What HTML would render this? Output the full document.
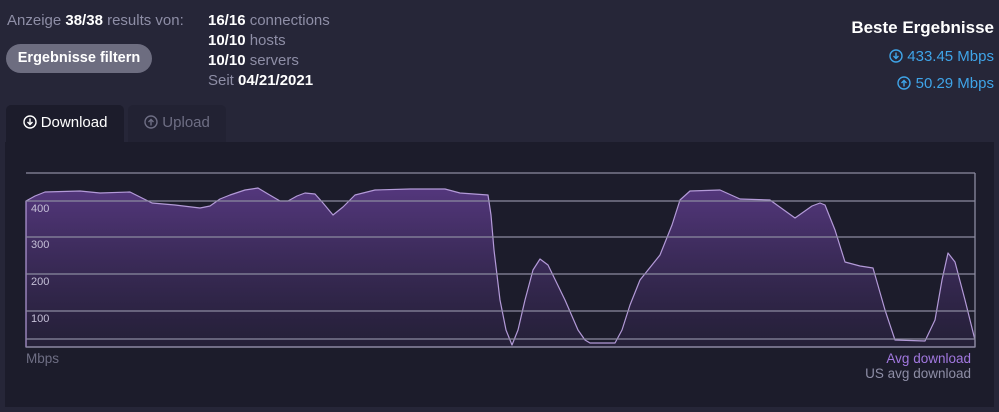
<!DOCTYPE html>
<html><head><meta charset="utf-8"><style>
body{margin:0;width:999px;height:412px;background:#262638;font-family:"Liberation Sans",sans-serif;overflow:hidden;position:relative;color:#8e8ea6}
.a{position:absolute;white-space:nowrap}
b{color:#fff}
svg.i{vertical-align:-2px}
</style></head><body>
<div class="a" style="left:7px;top:12px;font-size:15px">Anzeige <b>38/38</b> results von:</div>
<div class="a" style="left:6px;top:44px;width:146px;height:29px;border-radius:15px;background:#6d6d80;color:#fff;font-size:14.5px;font-weight:bold;line-height:29px;text-align:center">Ergebnisse filtern</div>
<div class="a" style="left:208px;top:11px;font-size:15px;line-height:20px"><b>16/16</b> connections<br><b>10/10</b> hosts<br><b>10/10</b> servers<br>Seit <b>04/21/2021</b></div>
<div class="a" style="right:5px;top:18px;font-size:17px;font-weight:bold;color:#fff">Beste Ergebnisse</div>
<div class="a" style="right:5px;top:48px;font-size:15px;color:#3fa4e8"><svg class="i" width="14" height="14" viewBox="0 0 14 14"><circle cx="7" cy="7" r="6" fill="none" stroke="#3fa4e8" stroke-width="1.4"/><path d="M7 3.5v6M4.5 7l2.5 2.5 2.5-2.5" fill="none" stroke="#3fa4e8" stroke-width="1.4"/></svg> 433.45 Mbps</div>
<div class="a" style="right:5px;top:75px;font-size:15px;color:#3fa4e8"><svg class="i" width="14" height="14" viewBox="0 0 14 14"><circle cx="7" cy="7" r="6" fill="none" stroke="#3fa4e8" stroke-width="1.4"/><path d="M7 10.5v-6M4.5 7l2.5-2.5 2.5 2.5" fill="none" stroke="#3fa4e8" stroke-width="1.4"/></svg> 50.29 Mbps</div>
<div class="a" style="left:6px;top:105px;width:118px;height:40px;background:#1c1c2b;border-radius:5px 5px 0 0;color:#fff;font-size:15px;line-height:36px;text-align:center"><svg class="i" width="14" height="14" viewBox="0 0 14 14"><circle cx="7" cy="7" r="6" fill="none" stroke="#fff" stroke-width="1.4"/><path d="M7 3.5v6M4.5 7l2.5 2.5 2.5-2.5" fill="none" stroke="#fff" stroke-width="1.4"/></svg> Download</div>
<div class="a" style="left:128px;top:105px;width:98px;height:37px;background:#222233;border-radius:5px 5px 0 0;color:#6e6e84;font-size:15px;line-height:36px;text-align:center"><svg class="i" width="14" height="14" viewBox="0 0 14 14"><circle cx="7" cy="7" r="6" fill="none" stroke="#6e6e84" stroke-width="1.4"/><path d="M7 10.5v-6M4.5 7l2.5-2.5 2.5 2.5" fill="none" stroke="#6e6e84" stroke-width="1.4"/></svg> Upload</div>
<div class="a" style="left:5px;top:142px;width:989px;height:265px;background:#1c1c2b"></div>
<svg class="a" style="left:0;top:0" width="999" height="412">
<defs><linearGradient id="g" x1="0" y1="0" x2="0" y2="1"><stop offset="0" stop-color="#5a3a86" stop-opacity=".9"/><stop offset="1" stop-color="#2a2240" stop-opacity=".6"/></linearGradient></defs>
<polygon fill="url(#g)" stroke="#b39ad8" stroke-width="1.2" stroke-linejoin="round" points="26,201 35,196 45,192 80,191 100,193 130,192 140,197 152,203 175,205 200,208 210,206 220,199 230,195 245,190 258,188 268,194 280,201 288,201 297,196 305,193 315,194 323,203 333,215 343,207 355,195 375,190 410,189 445,189 460,193 488,195 491,215 494,250 500,300 506,330 512,345 518,330 525,300 533,270 540,259 548,265 565,300 578,330 585,340 590,343 615,343 622,330 630,305 640,280 660,255 672,225 680,200 690,191 720,190 740,199 770,200 795,218 812,206 820,203 825,205 835,230 845,262 860,266 873,268 885,310 895,340 925,341 935,320 942,280 948,253 955,262 965,300 975,340 975,347 26,347"/>
<g stroke="#8b8aa0" stroke-width="1.3" fill="none">
<line x1="26" y1="173" x2="975" y2="173"/><line x1="26" y1="201" x2="975" y2="201"/><line x1="26" y1="237" x2="975" y2="237"/><line x1="26" y1="274" x2="975" y2="274"/><line x1="26" y1="311" x2="975" y2="311"/><line x1="26" y1="339" x2="975" y2="339"/><line x1="26" y1="347" x2="975" y2="347"/><line x1="975" y1="173" x2="975" y2="347"/></g>
<g fill="#c4bfd6" font-size="11" font-family="Liberation Sans">
<text x="31" y="212">400</text><text x="31" y="248">300</text><text x="31" y="285">200</text><text x="31" y="322">100</text></g>
<text x="26" y="363" fill="#6e6e84" font-size="13.5" font-family="Liberation Sans">Mbps</text>
<text x="971" y="363" text-anchor="end" fill="#a278e0" font-size="13.5" font-family="Liberation Sans">Avg download</text>
<text x="971" y="378" text-anchor="end" fill="#8e8ea6" font-size="13.5" font-family="Liberation Sans">US avg download</text>
</svg>
</body></html>
